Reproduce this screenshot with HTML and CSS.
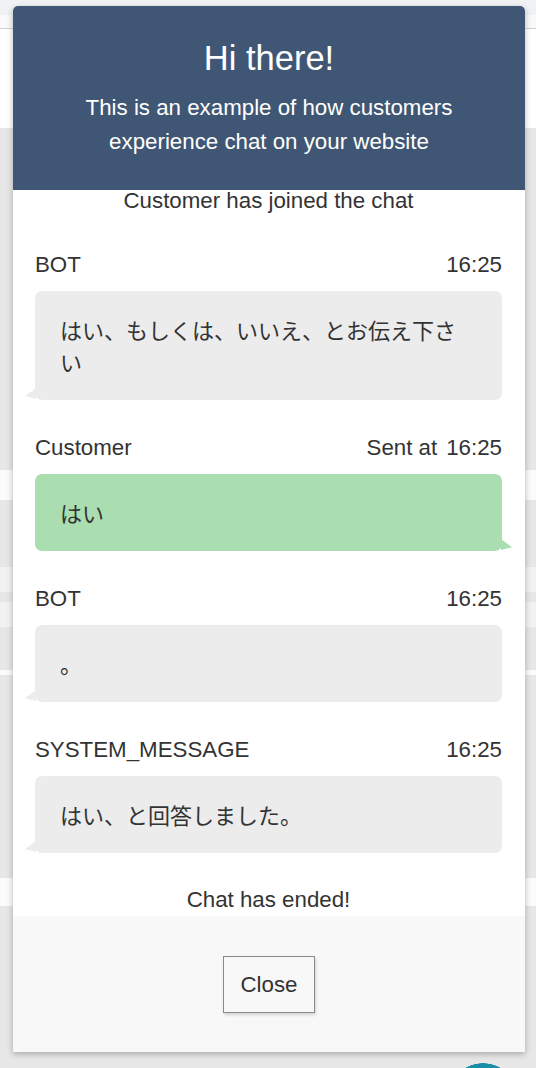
FILE: index.html
```html
<!DOCTYPE html>
<html lang="en">
  <head>
    <meta charset="UTF-8" />
    <meta name="viewport" content="width=device-width, initial-scale=1.0" />
    <title>Chat Preview</title>
    <link rel="stylesheet" href="styles.css">
  </head>
  <body>
    <!-- page behind the widget -->
    <div class="page">
      <div class="band band-top"></div>
      <div class="band band-nav"></div>
      <div class="band band-white"></div>
      <div class="band band-grey h-342"></div>
      <div class="band band-light h-30"></div>
      <div class="band band-grey h-67"></div>
      <div class="band band-row h-25"></div>
      <div class="band band-grey h-10"></div>
      <div class="band band-row h-25"></div>
      <div class="band band-grey h-43"></div>
      <div class="band band-light h-5"></div>
      <div class="band band-grey h-203"></div>
      <div class="band band-light h-28"></div>
      <div class="band band-grey band-fill"></div>
    </div>

    <div class="chat-widget">
      <div class="chat-header">
        <h2>Hi there!</h2>
        <p>This is an example of how customers experience chat on your website</p>
      </div>

      <div class="chat-body">
        <div class="chat-event">Customer has joined the chat</div>

        <div class="message bot">
          <div class="message-info">
            <span>BOT</span>
            <span>16:25</span>
          </div>
          <div class="bubble">はい、もしくは、いいえ、とお伝え下さい</div>
        </div>

        <div class="message customer">
          <div class="message-info">
            <span>Customer</span>
            <span><span class="sent-at">Sent at</span>16:25</span>
          </div>
          <div class="bubble">はい</div>
        </div>

        <div class="message bot">
          <div class="message-info">
            <span>BOT</span>
            <span>16:25</span>
          </div>
          <div class="bubble">。</div>
        </div>

        <div class="message bot">
          <div class="message-info">
            <span>SYSTEM_MESSAGE</span>
            <span>16:25</span>
          </div>
          <div class="bubble">はい、と回答しました。</div>
        </div>

        <div class="chat-event chat-ended">Chat has ended!</div>
      </div>

      <div class="chat-footer">
        <button type="button">Close</button>
      </div>
    </div>

    <div class="launcher"></div>
  </body>
</html>
```

FILE: styles.css
```css
* {
  box-sizing: border-box;
}
html,
body {
  margin: 0;
  padding: 0;
  height: 100%;
  overflow: hidden;
  font-family: "Liberation Sans", Arial, "Noto Sans CJK JP", sans-serif;
  color: #333;
}
.page {
  display: flex;
  flex-direction: column;
  height: 100%;
}
.band {
  flex-shrink: 0;
}
.band-top {
  height: 15px;
  background: #f1f2f4;
}
.band-nav {
  height: 14px;
  background: #f9f9f9;
  border-bottom: solid 1px #d3d3d5;
}
.band-white {
  height: 99px;
  background: #fff;
}
.band-grey {
  background: #e7e7e7;
}
.band-light {
  background: #fbfbfb;
}
.band-row {
  background: #f2f2f2;
}
.band-fill {
  flex: 1;
}
.h-342 { height: 342px; }
.h-30 { height: 30px; }
.h-67 { height: 67px; }
.h-25 { height: 25px; }
.h-10 { height: 10px; }
.h-43 { height: 43px; }
.h-5 { height: 5px; }
.h-203 { height: 203px; }
.h-28 { height: 28px; }

/* chat widget */
.chat-widget {
  position: absolute;
  top: 6px;
  left: 13px;
  width: 512px;
  display: flex;
  flex-direction: column;
  background: #fff;
  border-radius: 5px 5px 0 0;
  box-shadow: 0 2px 6px rgba(0, 0, 0, 0.28);
}
.chat-header {
  background: #3f5774;
  color: #fff;
  text-align: center;
  padding: 32px 36px 31px;
  border-radius: 5px 5px 0 0;
}
.chat-header h2 {
  margin: 0;
  font-size: 34.5px;
  font-weight: normal;
  line-height: 40px;
}
.chat-header p {
  margin: 13px 0 0;
  font-size: 22.3px;
  line-height: 34px;
}
.chat-body {
  padding: 0 23px 3px 22px;
  font-size: 22.3px;
}
.chat-event {
  text-align: center;
  line-height: 22px;
}
.chat-ended {
  margin-top: 34px;
  line-height: 26px;
}
.message {
  margin-top: 35px;
}
.chat-event + .message {
  margin-top: 40px;
}
.message-info {
  display: flex;
  justify-content: space-between;
  line-height: 26px;
  margin-bottom: 13px;
}
.sent-at {
  margin-right: 9px;
}
.bubble {
  position: relative;
  background: #ececec;
  border-radius: 7px;
  padding: 22px 30px 23px 25px;
  font-size: 22px;
  line-height: 32px;
  font-family: "Noto Sans CJK JP", "Liberation Sans", sans-serif;
}
.bubble::after {
  content: "";
  position: absolute;
  bottom: 1px;
  width: 11px;
  height: 11px;
  background: inherit;
}
.bot .bubble::after {
  left: -10px;
  clip-path: polygon(100% 0, 100% 100%, 0 75%);
}
.customer .bubble {
  background: #aadeb1;
}
.customer .bubble::after {
  right: -10px;
  clip-path: polygon(0 0, 100% 75%, 0 100%);
}
.chat-footer {
  background: #f8f8f8;
  height: 136px;
  display: flex;
  align-items: center;
  justify-content: center;
}
.chat-footer button {
  font-family: "Liberation Sans", Arial, sans-serif;
  font-size: 22.3px;
  color: #333;
  background: #f8f8f8;
  border: solid 1px #8a8a8a;
  padding: 14px 16px;
  line-height: 27px;
  box-shadow: 1px 2px 3px rgba(0, 0, 0, 0.15);
}
.launcher {
  position: absolute;
  left: 447px;
  bottom: 0;
  width: 72px;
  height: 5px;
  background: radial-gradient(circle 36px at 36px 36px, #1a8ea6 35.5px, transparent 36px);
}
```
